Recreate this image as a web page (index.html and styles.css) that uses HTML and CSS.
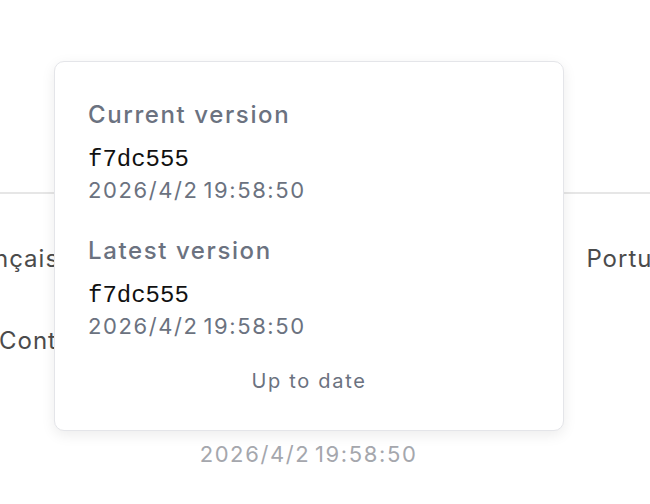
FILE: index.html
```html
<!DOCTYPE html>
<html lang="en">
<head>
<meta charset="utf-8">
<title>Version</title>
<link rel="stylesheet" href="styles.css">
</head>
<body>
<div class="page">
  <div class="top-space"></div>
  <hr class="divider">
  <div class="lang-row">
    <span class="lang first">Français</span>
    <span class="lang last">Português</span>
  </div>
  <div class="link-row">
    <span class="link">Contact</span>
  </div>
  <div class="footer-date">2026/4/2 19:58:50</div>

  <div class="popover">
    <section class="block">
      <h3 class="title">Current version</h3>
      <div class="hash">f7dc555</div>
      <div class="date">2026/4/2 19:58:50</div>
    </section>
    <section class="block second">
      <h3 class="title">Latest version</h3>
      <div class="hash">f7dc555</div>
      <div class="date">2026/4/2 19:58:50</div>
    </section>
    <div class="status">Up to date</div>
  </div>
</div>
</body>
</html>
```
FILE: styles.css
```css
* { box-sizing: border-box; }
html, body {
  margin: 0;
  padding: 0;
  background: #ffffff;
}
body {
  font-family: Inter, "Liberation Sans", sans-serif;
  width: 650px;
  height: 504px;
  overflow: hidden;
}
.page {
  position: relative;
  width: 650px;
  height: 504px;
  overflow: hidden;
}
.top-space { height: 192px; }
.divider {
  margin: 0;
  border: 0;
  height: 2px;
  background: #e6e6e6;
}
.lang-row {
  display: flex;
  justify-content: space-between;
  margin-top: 47px;
  height: 34px;
  align-items: center;
  font-size: 24px;
  letter-spacing: 1px;
  color: #4b4b4b;
  white-space: nowrap;
}
.lang.first { margin-left: -45px; }
.lang.last { margin-right: -62px; }
.link-row {
  margin-top: 48px;
  height: 34px;
  display: flex;
  align-items: center;
  font-size: 24px;
  letter-spacing: 1px;
  color: #4b4b4b;
}
.link { margin-left: -1px; }
.footer-date {
  margin-top: 82px;
  text-align: center;
  padding-right: 33px;
  font-size: 22px;
  line-height: 30px;
  letter-spacing: 1.6px;
  word-spacing: -3px;
  color: #a5a7ad;
}
.popover {
  position: absolute;
  left: 54px;
  top: 61px;
  width: 510px;
  background: #ffffff;
  border: 1px solid #e4e5e9;
  border-radius: 10px;
  box-shadow: 0 4px 14px rgba(0, 0, 0, 0.08);
  padding: 37px 33px 35px;
}
.block.second { margin-top: 30px; }
.title {
  margin: 0 0 13px;
  font-size: 24px;
  line-height: 32px;
  font-weight: 500;
  letter-spacing: 1.6px;
  color: #6b7280;
}
.hash {
  font-family: "Liberation Mono", "DejaVu Sans Mono", monospace;
  font-size: 24px;
  line-height: 30px;
  color: #111111;
  padding-top: 1px;
  height: 31px;
}
.date {
  font-size: 22px;
  line-height: 30px;
  letter-spacing: 1.6px;
  word-spacing: -3px;
  color: #6b7280;
}
.status {
  margin-top: 26px;
  text-align: center;
  font-size: 20px;
  line-height: 28px;
  letter-spacing: 1.7px;
  color: #6b7280;
}
```
